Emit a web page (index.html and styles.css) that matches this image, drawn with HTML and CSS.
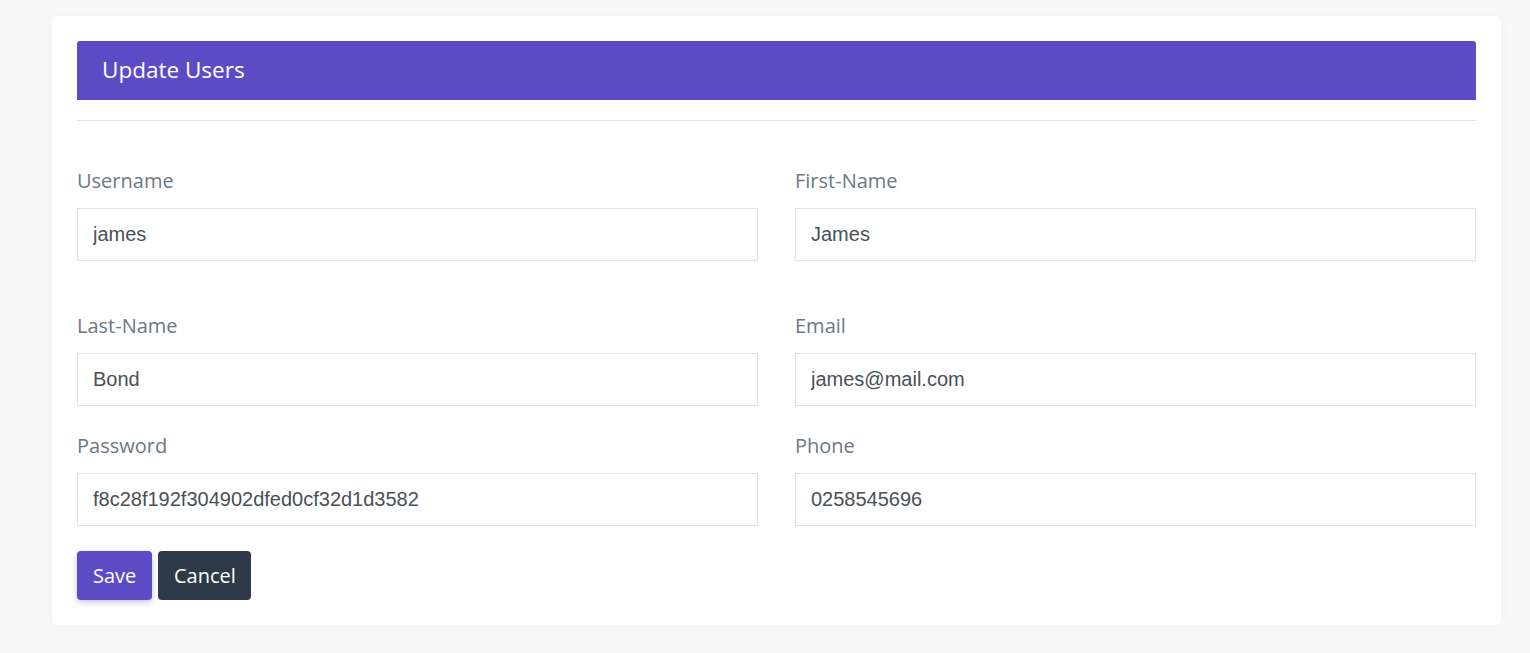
FILE: index.html
```html
<!DOCTYPE html>
<html>
<head>
<meta charset="utf-8">
<link rel="stylesheet" href="styles.css">
</head>
<body>
<div class="page">
  <div class="card">
    <div class="card-header">Update Users</div>
    <hr class="divider">
    <form class="form">
      <div class="row row-1">
        <div class="group">
          <label class="label">Username</label>
          <input class="input" type="text" value="james">
        </div>
        <div class="group">
          <label class="label">First-Name</label>
          <input class="input" type="text" value="James">
        </div>
      </div>
      <div class="row row-2">
        <div class="group">
          <label class="label">Last-Name</label>
          <input class="input" type="text" value="Bond">
        </div>
        <div class="group">
          <label class="label">Email</label>
          <input class="input" type="text" value="james@mail.com">
        </div>
      </div>
      <div class="row row-3">
        <div class="group">
          <label class="label">Password</label>
          <input class="input" type="text" value="f8c28f192f304902dfed0cf32d1d3582">
        </div>
        <div class="group">
          <label class="label">Phone</label>
          <input class="input" type="text" value="0258545696">
        </div>
      </div>
      <div class="actions">
        <button type="button" class="btn btn-save">Save</button>
        <button type="button" class="btn btn-cancel">Cancel</button>
      </div>
    </form>
  </div>
</div>
</body>
</html>
```
FILE: styles.css
```css
* { box-sizing: border-box; }
html, body {
  margin: 0;
  padding: 0;
  background: #f8f8f8;
  font-family: "Open Sans", "Liberation Sans", sans-serif;
}
.page {
  padding: 16px 29px 28px 52px;
}
.card {
  background: #ffffff;
  border-radius: 6px;
  padding: 25px;
  box-shadow: 0 0 12px rgba(0, 0, 0, 0.03);
}
.card-header {
  background: #5d4bc6;
  color: #ffffff;
  height: 59px;
  line-height: 57px;
  padding-left: 25px;
  font-size: 22.5px;
  border-radius: 3px 3px 0 0;
}
.divider {
  border: 0;
  border-top: 1px solid #e5e5e5;
  margin: 20px 0 0 0;
  height: 0;
}
.form {
  padding-top: 46px;
}
.row {
  display: grid;
  grid-template-columns: 1fr 1fr;
  column-gap: 37px;
}
.row-1 { margin-bottom: 51px; }
.row-2 { margin-bottom: 26px; }
.row-3 { margin-bottom: 25px; }
.group {
  display: flex;
  flex-direction: column;
}
.label {
  font-size: 20px;
  line-height: 27px;
  color: #6c7884;
  margin-bottom: 14px;
}
.input {
  height: 53px;
  border: 1px solid #e2e2e2;
  border-radius: 0;
  padding: 0 15px;
  font-family: "Liberation Sans", Arial, sans-serif;
  font-size: 20px;
  color: #495057;
  background: #ffffff;
  outline: none;
}
.actions {
  display: flex;
  gap: 6px;
}
.btn {
  height: 49px;
  border: 0;
  border-radius: 4px;
  font-family: "Open Sans", sans-serif;
  font-size: 20px;
  color: #ffffff;
  padding: 0 16px;
}
.btn-save {
  background: #5d4bc6;
  box-shadow: 0 2px 6px rgba(93, 75, 198, 0.35);
  width: 75px;
}
.btn-cancel {
  background: #2e3a48;
  width: 93px;
}
```
